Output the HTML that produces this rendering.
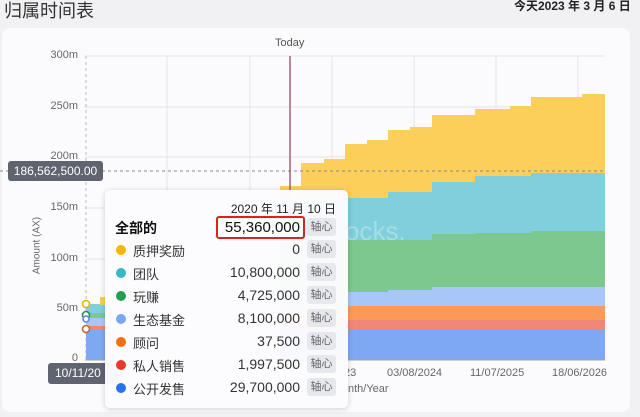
<!DOCTYPE html>
<html><head><meta charset="utf-8">
<style>
*{margin:0;padding:0;box-sizing:border-box}
body{width:640px;height:417px;overflow:hidden;background:#f1f1f3;font-family:"Liberation Sans","Noto Sans CJK SC",sans-serif;position:relative;color:#222}
.t{position:absolute;white-space:nowrap}
.card{position:absolute;left:2px;top:28px;width:628px;height:384px;background:#fbfbfd;border-radius:8px}
.tip{position:absolute;left:105px;top:190px;width:243px;height:218px;background:rgba(252,252,254,0.97);border-radius:5px;box-shadow:0 1px 6px rgba(0,0,0,0.18)}
.row{position:absolute;left:0;width:243px;height:20px;font-size:13px}
.dot{position:absolute;left:11px;top:5px;width:10px;height:10px;border-radius:50%}
.lbl{position:absolute;left:28px;top:1px;color:#333}
.val{position:absolute;right:48px;top:1px;color:#333;font-size:14px}
.chip{position:absolute;left:202px;top:0;width:29px;height:18px;background:#e6e8ee;border-radius:3px;font-size:11px;color:#666;text-align:center;line-height:18px}
.yl{position:absolute;right:562px;font-size:11px;color:#666}
.xl{position:absolute;font-size:11px;color:#666}
</style></head><body>
<div class="t" style="left:4px;top:-3px;font-size:18px;color:#333">归属时间表</div>
<div class="t" style="left:514px;top:-3px;font-size:12px;font-weight:bold;color:#222">今天2023 年 3 月 6 日</div>
<div class="card"></div>
<svg style="position:absolute;left:0;top:0" width="640" height="417">
<g stroke="#e4e4ea" stroke-width="1">
<line x1="85" y1="56" x2="605" y2="56"/><line x1="85" y1="107" x2="605" y2="107"/><line x1="85" y1="157" x2="605" y2="157"/><line x1="85" y1="208" x2="605" y2="208"/><line x1="85" y1="259" x2="605" y2="259"/><line x1="85" y1="309" x2="605" y2="309"/>
<line x1="167" y1="56" x2="167" y2="360"/><line x1="250" y1="56" x2="250" y2="360"/><line x1="332" y1="56" x2="332" y2="360"/><line x1="414" y1="56" x2="414" y2="360"/><line x1="496" y1="56" x2="496" y2="360"/><line x1="578" y1="56" x2="578" y2="360"/>
</g>
<line x1="86" y1="56" x2="86" y2="360" stroke="#bbb" stroke-dasharray="3,3"/>
<polygon fill="#fbcf5a" points="280,360 280,186 301,186 301,163 324,163 324,159 345,159 345,144 367,144 367,140 388,140 388,130 410,130 410,127 432,127 432,115 475,115 475,109 510,109 510,106 531,106 531,97 582,97 582,94 605,94 605,360"/>
<polygon fill="#7fcfdc" points="280,360 280,200 345,200 345,198 388,198 388,192 432,192 432,182 475,182 475,176 531,176 531,173 605,173 605,360"/>
<polygon fill="#7cc88e" points="280,360 280,240 432,240 432,234 475,234 475,233 531,233 531,231 605,231 605,360"/>
<polygon fill="#a8c6f7" points="280,360 280,292 388,292 388,290 432,290 432,287 605,287 605,360"/>
<rect x="280" y="306" width="325" height="54" fill="#fb9a58"/>
<rect x="280" y="320" width="325" height="40" fill="#f08878"/>
<rect x="280" y="330" width="325" height="30" fill="#7ea9f2"/>
<rect x="86" y="304" width="20" height="56" fill="#7fcfdc"/>
<rect x="86" y="313" width="20" height="47" fill="#7cc88e"/>
<rect x="86" y="318" width="20" height="42" fill="#a8c6f7"/>
<rect x="86" y="326" width="20" height="34" fill="#f08878"/>
<rect x="86" y="330" width="20" height="30" fill="#7ea9f2"/>
<rect x="100" y="297" width="6" height="8" fill="#fbcf5a"/>
<line x1="85" y1="360" x2="605" y2="360" stroke="#9aa" />
<g fill="#fff" stroke-width="1.6">
<circle cx="86" cy="304" r="3.5" stroke="#e5b800"/><circle cx="86" cy="315" r="3.5" stroke="#2a8a50"/><circle cx="86" cy="319" r="3" stroke="#5c8ee0"/><circle cx="86" cy="329" r="3.5" stroke="#c06a2a"/>
</g>
<line x1="0" y1="171" x2="605" y2="171" stroke="#888" stroke-dasharray="3,3"/>
<line x1="290" y1="56" x2="290" y2="232" stroke="#a0607a" stroke-width="1.5"/>
<text x="306" y="240" font-size="26" fill="rgba(255,255,255,0.3)" font-family="Liberation Sans">Unlocks.</text>
</svg>
<div class="t" style="left:275px;top:37px;font-size:11px;color:#555">Today</div>
<div class="yl" style="top:49px">300m</div>
<div class="yl" style="top:100px">250m</div>
<div class="yl" style="top:150px">200m</div>
<div class="yl" style="top:201px">150m</div>
<div class="yl" style="top:252px">100m</div>
<div class="yl" style="top:302px">50m</div>
<div class="yl" style="top:352px">0</div>
<div class="t" style="left:-3px;top:240px;transform:rotate(-90deg);transform-origin:center;font-size:10px;color:#666;width:80px;text-align:center">Amount (AX)</div>
<div class="xl" style="left:344px;top:367px">23</div>
<div class="xl" style="left:387px;top:367px">03/08/2024</div>
<div class="xl" style="left:470px;top:367px">11/07/2025</div>
<div class="xl" style="left:552px;top:367px">18/06/2026</div>
<div class="xl" style="left:348px;top:383px">nth/Year</div>
<div class="t" style="left:8px;top:161px;width:95px;height:20px;background:#5f6470;border-radius:3px;color:#fff;font-size:12px;line-height:20px;text-align:center">186,562,500.00</div>
<div class="t" style="left:48px;top:363px;width:70px;height:21px;background:#5f6470;border-radius:3px;color:#fff;font-size:12px;line-height:21px;padding-left:7px">10/11/20</div>
<div class="tip">
<div class="t" style="right:12px;top:10px;font-size:12px;color:#222">2020 年 11 月 10 日</div>
<div class="t" style="left:10px;top:28px;font-size:14px;font-weight:bold;color:#111">全部的</div>
<div class="t" style="left:111px;top:26px;width:89px;height:23px;border:2px solid #e02020;border-radius:3px;font-size:15px;text-align:right;padding-right:3px;line-height:20px;color:#111">55,360,000</div>
<div class="chip" style="top:28px">轴心</div>
<div class="row" style="top:50px"><div class="dot" style="background:#f5b800"></div><div class="lbl">质押奖励</div><div class="val">0</div><div class="chip">轴心</div></div>
<div class="row" style="top:73px"><div class="dot" style="background:#36b8c8"></div><div class="lbl">团队</div><div class="val">10,800,000</div><div class="chip">轴心</div></div>
<div class="row" style="top:96px"><div class="dot" style="background:#22a050"></div><div class="lbl">玩赚</div><div class="val">4,725,000</div><div class="chip">轴心</div></div>
<div class="row" style="top:119px"><div class="dot" style="background:#7aa8f0"></div><div class="lbl">生态基金</div><div class="val">8,100,000</div><div class="chip">轴心</div></div>
<div class="row" style="top:142px"><div class="dot" style="background:#f07010"></div><div class="lbl">顾问</div><div class="val">37,500</div><div class="chip">轴心</div></div>
<div class="row" style="top:165px"><div class="dot" style="background:#e83a2a"></div><div class="lbl">私人销售</div><div class="val">1,997,500</div><div class="chip">轴心</div></div>
<div class="row" style="top:188px"><div class="dot" style="background:#2a70e8"></div><div class="lbl">公开发售</div><div class="val">29,700,000</div><div class="chip">轴心</div></div>
</div>
</body></html>
